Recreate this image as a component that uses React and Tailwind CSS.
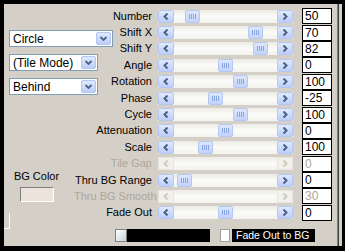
const rows = [
  { label: 'Number', value: '50', thumb: 27 },
  { label: 'Shift X', value: '70', thumb: 90 },
  { label: 'Shift Y', value: '82', thumb: 95 },
  { label: 'Angle', value: '0', thumb: 60 },
  { label: 'Rotation', value: '100', thumb: 75 },
  { label: 'Phase', value: '-25', thumb: 50 },
  { label: 'Cycle', value: '100', thumb: 75 },
  { label: 'Attenuation', value: '0', thumb: 60 },
  { label: 'Scale', value: '100', thumb: 40 },
  { label: 'Tile Gap', value: '0', disabled: true },
  { label: 'Thru BG Range', value: '0', thumb: 19 },
  { label: 'Thru BG Smooth', value: '30', disabled: true },
  { label: 'Fade Out', value: '0', thumb: 60 },
]

const ArrowBtn = ({ dir, disabled }) => (
  <div
    className={`w-[16px] h-full flex items-center justify-center rounded-[2px] border ${
      disabled ? 'border-[#e6e5de] bg-[#f1f0ea]' : 'border-[#b4c7f3] bg-linear-to-b from-[#e0e9fd] to-[#bdcefa]'
    }`}
  >
    <svg width="6" height="7" viewBox="0 0 6 7">
      <path
        d={dir === 'left' ? 'M4.5 0.5 L1.5 3.5 L4.5 6.5' : 'M1.5 0.5 L4.5 3.5 L1.5 6.5'}
        fill="none"
        stroke={disabled ? '#cdcbc0' : '#4d6185'}
        strokeWidth="2"
      />
    </svg>
  </div>
)

const Slider = ({ thumb, disabled }) => (
  <div className="relative flex w-[135px] h-[13px] bg-linear-to-b from-[#ecebe4] via-[#fbfbf9] to-[#f3f2ec]">
    <ArrowBtn dir="left" disabled={disabled} />
    <div className="flex-1" />
    <ArrowBtn dir="right" disabled={disabled} />
    {!disabled && (
      <div
        className="absolute top-0 h-[13px] w-[15px] rounded-[2px] border border-[#b4c7f3] bg-linear-to-b from-[#dde7fd] to-[#c3d3fb] flex items-center justify-center gap-[1px]"
        style={{ left: thumb }}
      >
        <span className="w-[1px] h-[5px] bg-[#8aa5e2]" />
        <span className="w-[1px] h-[5px] bg-[#8aa5e2]" />
        <span className="w-[1px] h-[5px] bg-[#8aa5e2]" />
        <span className="w-[1px] h-[5px] bg-[#8aa5e2]" />
      </div>
    )}
  </div>
)

const Combo = ({ text, width }) => (
  <div className={`${width} h-[17px] bg-white border border-[#7f9db9] flex items-center justify-between pl-[3px] pr-[1px]`}>
    <span className="text-[12px] leading-none text-black">{text}</span>
    <div className="w-[15px] h-[13px] rounded-[2px] border border-[#b4c7f3] bg-linear-to-b from-[#e0e9fd] to-[#bccdf9] flex items-center justify-center">
      <svg width="7" height="5" viewBox="0 0 7 5">
        <path d="M0.5 1 L3.5 4 L6.5 1" fill="none" stroke="#4d6185" strokeWidth="1.8" />
      </svg>
    </div>
  </div>
)

export default function App() {
  return (
    <div className="w-[345px] h-[251px] bg-black pt-[4px] pl-[4px] flex font-['Liberation_Sans',sans-serif] overflow-hidden">
      <div className="w-[333px] h-[242px] bg-[#d4d0c8] flex">
        {/* left column */}
        <div className="w-[70px] flex flex-col pt-[26px]">
          <div className="ml-[5px]">
            <Combo text="Circle" width="w-[104px]" />
          </div>
          <div className="ml-[5px] mt-[7px]">
            <Combo text="(Tile Mode)" width="w-[89px]" />
          </div>
          <div className="ml-[5px] mt-[7px]">
            <Combo text="Behind" width="w-[89px]" />
          </div>
          <div className="ml-[10px] w-[45px] mt-[75px] flex flex-col items-center">
            <span className="text-[11px] leading-[13px] text-black whitespace-nowrap">BG Color</span>
            <div className="mt-[4px] w-[34px] h-[15px] bg-[#ebe3dc] border border-t-[#808080] border-l-[#808080] border-b-white border-r-white" />
          </div>
          <div className="mt-[11px] w-[6px] h-[16px] border-r border-b border-white" />
        </div>

        {/* right column */}
        <div className="flex flex-col pt-[4px]">
          {rows.map((r) => (
            <div key={r.label} className="flex items-center h-[16.4px]">
              <span
                className={`w-[78px] text-right text-[11px] leading-none whitespace-nowrap ${
                  r.disabled ? 'text-[#aca899]' : 'text-black'
                }`}
              >
                {r.label}
              </span>
              <div className="ml-[6px]">
                <Slider thumb={r.thumb} disabled={r.disabled} />
              </div>
              <div
                className={`ml-[9px] w-[30px] h-[16px] bg-white border border-black text-[12px] leading-[14px] pl-[2px] ${
                  r.disabled ? 'text-[#aca899]' : 'text-black'
                }`}
              >
                {r.value}
              </div>
            </div>
          ))}
          <div className="flex items-center mt-[8px] h-[13px]">
            <div className="ml-[41px] w-[12px] h-[13px] border border-[#7f7f7f] bg-linear-to-br from-white to-[#c9d3dc]" />
            <div className="w-[83px] h-[13px] bg-black" />
            <div className="ml-[10px] w-[10px] h-[13px] bg-white border border-[#a0a0a0]" />
            <div className="ml-[2px] w-[83px] h-[13px] bg-black text-white text-[10.5px] leading-[13px] pl-[4px] whitespace-nowrap">
              Fade Out to BG
            </div>
          </div>
        </div>
      </div>
      <div className="w-[1px] h-[242px] bg-[#808080]" />
      <div className="w-[1px] h-[242px] bg-[#404040]" />
      <div className="w-[3px] h-[242px] bg-[#d4d0c8]" />
    </div>
  )
}
